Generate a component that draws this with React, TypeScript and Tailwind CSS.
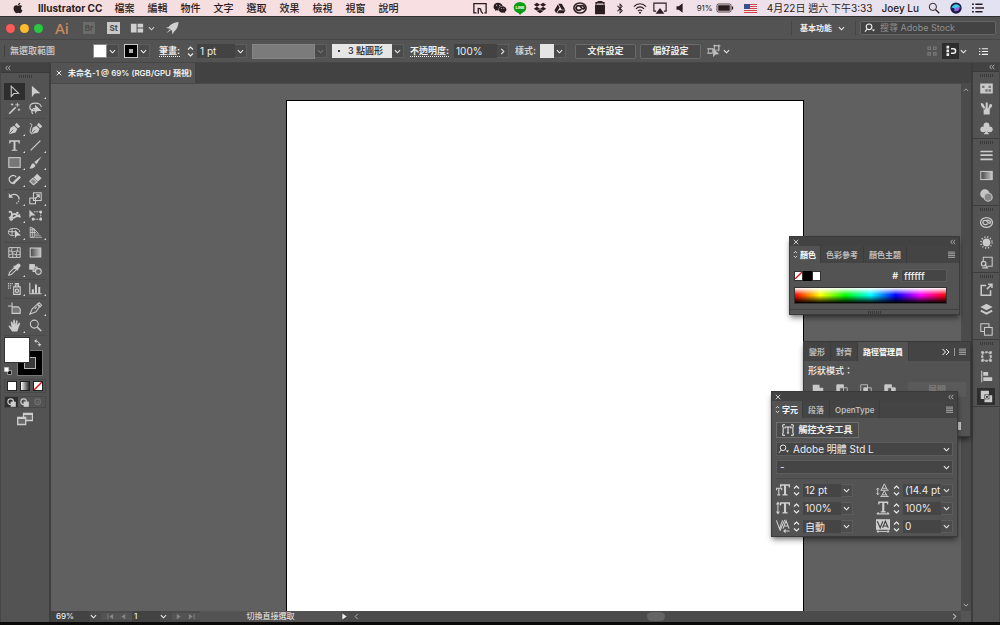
import React from 'react';
import { FaApple, FaDropbox, FaGoogleDrive, FaWeixin, FaBluetoothB } from 'react-icons/fa';

interface IconProps {
  className?: string;
  children: React.ReactNode;
}

const Icon: React.FC<IconProps> = ({ className = 'w-[14px] h-[14px]', children }) => (
  <svg viewBox="0 0 16 16" className={`shrink-0 ${className}`} fill="none" stroke="currentColor" strokeWidth="1.3" aria-hidden="true">
    {children}
  </svg>
);

const solid = { fill: 'currentColor', stroke: 'none' };

const Chevron = ({ className = 'w-[7px] h-[7px]' }: { className?: string }) => (
  <Icon className={className}>
    <path d="M2 5l6 6 6-6" strokeWidth="2.4" />
  </Icon>
);

const ChevronRight = () => (
  <Icon className="w-[7px] h-[7px]">
    <path d="M5 2l6 6-6 6" strokeWidth="2.4" />
  </Icon>
);

const Collapse = () => (
  <Icon className="w-[6px] h-[6px]">
    <path d="M7 2L2 8l5 6M14 2L9 8l5 6" strokeWidth="2" />
  </Icon>
);

const Close = () => (
  <Icon className="w-[6px] h-[6px]">
    <path d="M2 2l12 12M14 2L2 14" strokeWidth="2.6" />
  </Icon>
);

const MenuLines = ({ className = 'w-2 h-2' }: { className?: string }) => (
  <Icon className={className}>
    <path d="M0 2.5h16M0 6.5h16M0 10.5h16M0 14.5h16" strokeWidth="1.8" />
  </Icon>
);

const UpDown = ({ className = 'w-[7px] h-[13px]' }: { className?: string }) => (
  <svg viewBox="0 0 7 13" className={`shrink-0 ${className}`} fill="none" stroke="currentColor" strokeWidth="1.1" aria-hidden="true">
    <path d="M1 4.5L3.5 2 6 4.5M1 8.5L3.5 11 6 8.5" />
  </svg>
);

const Grip = () => (
  <div className="flex gap-px justify-center" aria-hidden="true">
    {[0, 1, 2, 3, 4, 5, 6].map((i) => (
      <span key={i} className="w-px h-[3px] bg-[#3a3a3a]" />
    ))}
  </div>
);

const nib = (
  <>
    <path d="M1 15l2-8 4.500-2.500L11.500 8.500 9.300 13z" {...solid} />
    <path d="M1.500 14.500l5-5" stroke="#535353" strokeWidth="1" />
    <path d="M8.300 3.800L10.500 1l4.500 4.500-2.800 2.200z" {...solid} />
  </>
);

interface Tool {
  label: string;
  more?: boolean;
  active?: boolean;
  art: React.ReactNode;
}

const toolGroups: Tool[][] = [
  [
    { label: '選取工具', active: true, art: <path d="M4 1.5V14l3.300-3.500 5.700-.3z" /> },
    { label: '直接選取工具', more: true, art: <path d="M3.500 1v14L7 10.500l7-.3z" {...solid} /> },
    {
      label: '魔術棒工具',
      art: (
        <>
          <path d="M1.500 14.500l8-8" strokeWidth="2" />
          <path d="M11.500 1v5M9 3.500h5M5 1.500v3M3.500 3h3M13.500 8v3M12 9.500h3" strokeWidth="1.100" />
        </>
      ),
    },
    {
      label: '套索工具',
      art: (
        <>
          <path d="M9 10.500C4 11.500 1 9.500 1 6.500 1 3.500 4 1.500 8 1.500s7 2 7 4.500M5 14.500c-2-1-2-4 0-6s3 1 1 2" strokeWidth="1.500" />
          <path d="M7.500 3.500v11l2.700-3.300 5.300-.2z" {...solid} />
        </>
      ),
    },
  ],
  [
    { label: '鋼筆工具', more: true, art: nib },
    {
      label: '曲線工具',
      art: (
        <>
          <g transform="translate(1.5 0)">{nib}</g>
          <path d="M1 2c4 0 2 3 1 6s-1 6 1.500 6.500" strokeWidth="1.200" />
        </>
      ),
    },
    { label: '文字工具', more: true, art: <path d="M1.500 1.500h13V5.500h-1.300L12.500 3.300H9.200v9.500l2.300.7v1h-7v-1l2.300-.7V3.300H3.500L2.800 5.500H1.500z" {...solid} /> },
    { label: '線段工具', more: true, art: <path d="M2 14L14 2" strokeWidth="1.600" /> },
    { label: '矩形工具', more: true, art: <rect x="1" y="2" width="14" height="12" fill="#777" /> },
    {
      label: '繪圖筆刷工具',
      more: true,
      art: (
        <>
          <path d="M15.500 0.500L6.500 7.500 9 10z" {...solid} />
          <path d="M0.500 15c2-.5 1.500-5.500 5-6l2.300 2.500c0 3-4.300 4.500-7.300 3.500z" {...solid} />
        </>
      ),
    },
    {
      label: 'Shaper 工具',
      more: true,
      art: (
        <>
          <path d="M8.500 12A4.700 4.700 0 1 1 10 5" strokeWidth="1.500" />
          <path d="M6 13l9-8.500" strokeWidth="2.800" />
        </>
      ),
    },
    {
      label: '橡皮擦工具',
      more: true,
      art: (
        <>
          <path d="M5.500 5.500L10 1l5.500 5.500-4.500 4z" {...solid} />
          <path d="M4.500 6.500L1 10l4.500 4.500 4.500-3.500z" fill="#888" />
        </>
      ),
    },
  ],
  [
    {
      label: '旋轉工具',
      more: true,
      art: (
        <>
          <path d="M3 5.500a5.800 5.800 0 1 1 1 7.500" strokeDasharray="15 1.500 1.500 1.500 1.500 9" strokeWidth="1.600" />
          <path d="M1 1.500V7h5.500z" {...solid} />
        </>
      ),
    },
    {
      label: '縮放工具',
      more: true,
      art: (
        <>
          <rect x="5.500" y="1" width="9.500" height="9.500" />
          <rect x="1" y="7.500" width="7" height="7" />
          <path d="M7.500 8.500L12.500 3.500M9 3.500h3.500V7" strokeWidth="1.500" />
        </>
      ),
    },
    {
      label: '寬度工具',
      more: true,
      art: (
        <>
          <path d="M1 4c3-2 4 1 3.500 3.500S6 12 8.500 10s4-2 7 0M1 11c4-1 4-5 7-5s3 4 7 1" strokeWidth="2" />
          <circle cx="4" cy="12.500" r="2" {...solid} />
          <circle cx="11.500" cy="5" r="1.600" {...solid} />
        </>
      ),
    },
    {
      label: '任意變形工具',
      art: (
        <>
          <path d="M0.500 1v10l2.500-3 5-.1z" {...solid} />
          <path d="M6 3.500h8.500v9H5v-2" strokeDasharray="2 1" />
          <path d="M13 2h3v3h-3zM13 11h3v3h-3zM3.500 11h3v3h-3z" {...solid} />
        </>
      ),
    },
    {
      label: '形狀建立程式工具',
      more: true,
      art: (
        <>
          <path d="M8 11.500c-4 1-7.500-.5-7.500-3.800S3 3 6.500 3H9c3 0 5.500 2 5.500 4.500M5 3.500v7.500M1 7h8" strokeWidth="1.200" />
          <path d="M8.500 4.500v10.500l2.500-3 5-.2z" {...solid} />
        </>
      ),
    },
    {
      label: '透視格點工具',
      more: true,
      art: (
        <>
          <path d="M1.500 1.500v12.500h5V3.500zM4 2.500v11.500M1.500 8h7M6 3.500l5.500 5.500M1.500 4.800h6" strokeWidth="1.100" />
          <path d="M7 14h9M7 12h7.500M7 10h5.500" stroke="#999" />
        </>
      ),
    },
  ],
  [
    {
      label: '網格工具',
      art: <path d="M1 2h14v12H1zM1 6c3 0 3 2 6.500 1S12 5 15 8M1 11c3 0 3-2 6.500-1S12 11 15 10M5.500 2c-3 4 2 7 0 12M11 2c3 3-3 7 0 12" strokeWidth="1.200" />,
    },
    { label: '漸層工具', art: <rect x="1.500" y="2.500" width="13" height="11" fill="url(#toolGradient)" /> },
    {
      label: '檢色滴管工具',
      more: true,
      art: (
        <>
          <path d="M1 15l1-3.500 6-6 2.500 2.500-6 6z" strokeWidth="1.300" />
          <path d="M7.500 3.500L9.300 3l2.500-2c2-1 4.500 1 3.400 3.300l-2.200 2.400-.4 1.600-1.200 1.200L6.400 4.600z" {...solid} />
        </>
      ),
    },
    {
      label: '漸變工具',
      art: (
        <>
          <rect x="1" y="2" width="5.500" height="5.500" fill="currentColor" />
          <path d="M5 5h5v5.500H5z" fill="#999" />
          <circle cx="11.500" cy="10.500" r="3.600" fill="#666" />
        </>
      ),
    },
  ],
  [
    {
      label: '符號噴灑器工具',
      more: true,
      art: (
        <>
          <path d="M0 2h6.500M0 4.800h5M0 7.600h4" strokeDasharray="1.300 1" strokeWidth="1.500" />
          <path d="M7 6h8v9.300H7zM9 6V3.500h4V6M8.500 1.800h5" strokeWidth="1.400" />
          <circle cx="11" cy="10.700" r="2" strokeWidth="1.500" />
        </>
      ),
    },
    {
      label: '長條圖工具',
      more: true,
      art: (
        <>
          <path d="M1 1v13.500h14.500" />
          <path d="M3.500 9H6v5.500H3.500zM7.300 3h2.500v11.500H7.300zM11.300 6h2.500v8.500h-2.500z" {...solid} />
        </>
      ),
    },
  ],
  [
    {
      label: '工作區域工具',
      art: (
        <>
          <path d="M0 5h5M5 0.500v5" />
          <path d="M5 6h7.500L15 8.500V14H5z" fill="#777" />
        </>
      ),
    },
    { label: '切片工具', more: true, art: <path d="M1 15l3-6.500L10 3l3 3-4.500 6zM10.500 2.500L12.500 1l3 3L14 5.800zM7 8.500L9.500 6" /> },
    {
      label: '手形工具',
      more: true,
      art: <path d="M5 15.500L1 9.500c-.6-1.200.8-1.800 1.500-1l2 2L3.300 4c0-1.300 1.700-1.400 2-.2L6.400 7l.1-5.300c0-1.400 1.900-1.400 2 0L8.800 7 10 2.400c.3-1.100 2-.9 1.900.3L11.200 7.700l2-2.700c.6-.8 2.100-.2 1.700.8L12.500 12l-1 3.500z" {...solid} />,
    },
    {
      label: '放大鏡工具',
      art: (
        <>
          <circle cx="6.500" cy="6.300" r="4.900" />
          <path d="M10 9.800l5 5" strokeWidth="2" />
        </>
      ),
    },
  ],
];

const dockGroups: Tool[][] = [
  [
    {
      label: '色票',
      art: (
        <>
          <path d="M1 2.500h14v11H1z" fill="currentColor" />
          <path d="M2.500 4.500h3v3h-3zM10.500 4.500h3v3h-3zM6.500 9h3v3h-3zM10.500 9h3v3h-3z" fill="#777" stroke="none" />
        </>
      ),
    },
    { label: '筆刷', art: <path d="M4.500 8h7.500v7.500H4.500zM7 8L4 2 1 1l.5 4 4 4.500zM7 8V0.500h2.500V8zM10 8l2-5.500 3 0.500-.5 3L11.500 9z" {...solid} /> },
    {
      label: '符號',
      art: (
        <g {...solid}>
          <circle cx="8" cy="4.200" r="3.600" />
          <circle cx="4" cy="9" r="3.600" />
          <circle cx="12" cy="9" r="3.600" />
          <path d="M7.300 7h1.400l.8 5.500 2 2.500h-7l2-2.500z" />
        </g>
      ),
    },
  ],
  [
    { label: '筆畫', art: <path d="M0.500 3h15M0.500 7.500h15M0.500 12.800h15" strokeWidth="2" /> },
    { label: '漸層', art: <rect x="1" y="3" width="14" height="10" fill="url(#toolGradient)" /> },
    {
      label: '透明度',
      art: (
        <>
          <circle cx="6" cy="6" r="5" fill="#c4c4c4" />
          <circle cx="10" cy="10" r="5" fill="#888" />
        </>
      ),
    },
  ],
  [
    {
      label: '資料庫',
      art: (
        <>
          <ellipse cx="8" cy="8" rx="7.300" ry="6" strokeWidth="1.500" />
          <path d="M9.500 9.500C8 11.500 3.500 11 3.500 8S7.500 4.500 9 7s4 2.500 4 .5-4-3.500-5.500-1" strokeWidth="1.600" />
        </>
      ),
    },
    {
      label: '外觀',
      art: (
        <>
          <circle cx="8" cy="8" r="4.800" {...solid} />
          <circle cx="8" cy="8" r="6.900" strokeDasharray="1.500 2.110" strokeWidth="1.800" />
        </>
      ),
    },
    {
      label: '繪圖樣式',
      art: (
        <>
          <path d="M4 6V1.500h11v11H9" />
          <circle cx="4.500" cy="9.500" r="2.800" strokeWidth="1.500" />
          <path d="M6 10l3 4.500H3" strokeWidth="1.500" />
        </>
      ),
    },
  ],
  [
    { label: '資產轉存', art: <path d="M7.500 3H1.500v12H13V9M10 1.500h4.700v4.700M14.500 1.500L8.500 7.500" strokeWidth="1.900" /> },
    {
      label: '圖層',
      art: (
        <>
          <path d="M8 1l7.500 4L8 9 0.500 5z" {...solid} />
          <path d="M1 9.300L8 13l7-3.700" strokeWidth="2.400" />
        </>
      ),
    },
    {
      label: '工作區域',
      art: (
        <>
          <path d="M5 10.500H1V1h10v4" />
          <rect x="5.500" y="5.500" width="9.500" height="9.500" />
        </>
      ),
    },
  ],
  [
    {
      label: '變形',
      art: (
        <>
          <rect x="3.500" y="3.500" width="9" height="9" strokeDasharray="2 1" />
          <path d="M1.500 1.500h3v3h-3zM6.500 1.500h3v2h-3zM11.500 1.500h3v3h-3zM1.500 6.500h2v3h-2zM12.500 6.500h2v3h-2zM1.500 11.500h3v3h-3zM6.500 12.500h3v2h-3zM11.500 11.500h3v3h-3z" {...solid} />
        </>
      ),
    },
    { label: '對齊', art: <path d="M1.500 1h1.300v14H1.500zM4 2.500h6V7H4zM4 9h11v4.500H4z" {...solid} /> },
    {
      label: '路徑管理員',
      active: true,
      art: (
        <>
          <path d="M1 1h10v4.500H5.500V11H1z" {...solid} />
          <path d="M15 15H5.500v-3.500h6V6.500H15z" {...solid} />
          <path d="M6.800 6.800h3.400v3.400H6.800z" strokeWidth="1.200" />
        </>
      ),
    },
  ],
];

const menus = ['檔案', '編輯', '物件', '文字', '選取', '效果', '檢視', '視窗', '說明'];

const MenuBar = () => (
  <header className="flex items-center h-4 shrink-0 pl-3 pr-4 text-[10px] text-[#2b1c20] bg-linear-to-r from-[#f3dedf] via-[#f8dfe2] to-[#e2e2f2]">
    <FaApple className="w-3 h-3 mr-[14px]" />
    <span className="font-bold mr-3 whitespace-nowrap">Illustrator CC</span>
    <nav className="flex gap-[13px] whitespace-nowrap">
      {menus.map((m) => (
        <button key={m} className="font-medium">{m}</button>
      ))}
    </nav>
    <div className="flex items-center ml-auto gap-[6px] whitespace-nowrap">
      <Icon>
        <path d="M4 13.500H1V3h14v10.500h-2" strokeWidth="1.500" />
        <path d="M6 14.500V8.500c2 0 3 0 3 2s1 2 2.500 4" strokeWidth="1.500" />
      </Icon>
      <FaWeixin className="w-[14px] h-3" />
      <svg viewBox="0 0 14 13" className="w-[14px] h-[13px]" aria-hidden="true">
        <ellipse cx="7" cy="5.500" rx="6.300" ry="5.500" fill="#0a9c14" />
        <path d="M4 9.500L7 13l3.500-3.500z" fill="#0a9c14" />
        <text x="7" y="7" textAnchor="middle" fontSize="4" fontWeight="700" fill="#fff">LINE</text>
      </svg>
      <FaDropbox className="w-[14px] h-3" />
      <FaGoogleDrive className="w-[14px] h-[11px]" />
      <Icon>
        <ellipse cx="8" cy="8" rx="7" ry="5.800" strokeWidth="1.800" />
        <path d="M9.500 9.500C8 11.500 3.500 11 3.500 8S7.500 4.500 9 7s4 2.500 4 .5-4-3.500-5.500-1" strokeWidth="2" />
      </Icon>
      <Icon>
        <path d="M3 5h10v9.500H3z" fill="currentColor" />
        <path d="M3.500 4V2h9v2M6 2V0.800h4V2" strokeWidth="1.500" />
      </Icon>
      <FaBluetoothB className="w-[14px] h-[11px]" />
      <Icon>
        <path d="M1 6.500c4-4.500 10-4.500 14 0M3.300 9c3-3 6.400-3 9.400 0M5.600 11.500c1.500-1.500 3.300-1.500 4.800 0" strokeWidth="1.300" />
        <circle cx="8" cy="13.500" r="1.200" {...solid} />
      </Icon>
      <Icon>
        <path d="M3.500 11.500H1V2.500h14v9h-2.500" />
        <path d="M8 8l5 6.500H3z" {...solid} />
      </Icon>
      <Icon className="w-[14px] h-[14px] mr-1">
        <path d="M4 6h2.500L11 2.500v11L6.500 10H4z" {...solid} />
      </Icon>
      <div className="flex items-center gap-[3px] mr-1">
        <span className="text-[8px]">91%</span>
        <svg viewBox="0 0 18 10" className="w-[18px] h-[10px]" fill="none" stroke="currentColor" aria-hidden="true">
          <rect x="1" y="1" width="14" height="8" rx="1.500" strokeWidth="0.800" />
          <path d="M2.200 2.200h11.600v5.600H2.200z" {...solid} />
          <path d="M16.500 3.500v3" strokeWidth="1.300" />
        </svg>
      </div>
      <svg viewBox="0 0 13 9" className="w-[13px] h-[9px] mr-1" aria-hidden="true">
        <path fill="#f2e9e9" d="M0 0h13v9H0z" />
        <path stroke="#d0404c" d="M0 .5h13M0 2.500h13M0 4.500h13M0 6.500h13M0 8.500h13" />
        <path fill="#34508f" d="M0 0h6v5H0z" />
      </svg>
      <span className="mr-[3px]">4月22日 週六 下午3:33</span>
      <span className="font-medium mr-[3px]">Joey Lu</span>
      <Icon className="w-3 h-3 mr-1">
        <circle cx="6.500" cy="6.500" r="4.800" />
        <path d="M10 10l5 5" strokeWidth="1.600" />
      </Icon>
      <Icon className="w-3 h-3 mr-1">
        <circle cx="8" cy="8" r="7.500" fill="#1b1d45" stroke="none" />
        <path d="M2 8c2-6 10-7 12 0-3-2-4 2-6 2S5 7 2 8z" fill="#41c8e6" stroke="none" />
        <path d="M5 11c3-5 6-4 8-3-1 4-5 6-8 3z" fill="#a35df0" stroke="none" />
      </Icon>
      <Icon className="w-3 h-3">
        <path d="M4.500 3H14M4.500 8H16M4.500 13H14M0 3h2.500M0 8h2.500M0 13h2.500" strokeWidth="1.700" />
      </Icon>
    </div>
  </header>
);

const AppBar = () => (
  <div className="flex items-center h-6 shrink-0 pl-[6px] pr-1 border-t border-[#2f2f2f] border-b border-b-[#464646]">
    <div className="flex gap-[5px]">
      <button aria-label="關閉" className="w-[9px] h-[9px] rounded-full bg-[#fc5b57]" />
      <button aria-label="最小化" className="w-[9px] h-[9px] rounded-full bg-[#fdbc2e]" />
      <button aria-label="縮放" className="w-[9px] h-[9px] rounded-full bg-[#2ac840]" />
    </div>
    <span className="ml-3 w-7 font-['Noto_Sans'] text-[15px] font-medium text-[#d08a5c]">Ai</span>
    <button className="w-3 h-3 bg-[#6b6b6b] text-[8px] leading-3 font-semibold text-[#484848]">Br</button>
    <button className="ml-3 w-[13px] h-3 bg-[#c9c9c9] text-[8px] leading-3 font-bold text-[#4c4c4c]">St</button>
    <button aria-label="排列文件" className="flex items-center gap-1 ml-[10px] text-[#d0d0d0]">
      <Icon>
        <path d="M1 3h6.500v10H1zM8.700 3H15v4.500H8.700zM8.700 8.700H15V13H8.700z" {...solid} />
      </Icon>
      <Chevron />
    </button>
    <button aria-label="GPU 效能" className="ml-[10px] text-[#d0d0d0]">
      <Icon>
        <path d="M15.500 1C9 2 6 4 4.500 6.500L1 8l4 .5L8 11l.5 4.500L10.500 12C13.500 9.500 15 6 15.500 1zM1.500 14l4-4.500 1 1z" {...solid} />
      </Icon>
    </button>
    <button className="flex items-center gap-[6px] ml-auto h-[14px] pl-2 pr-[10px] border-x border-[#464646] text-[8px] font-bold">
      基本功能
      <Chevron />
    </button>
    <label className="flex items-center ml-1 pl-[3px] w-[136px] h-[14px] rounded-xs border border-[#646464] bg-[#434343]">
      <Icon className="w-3 h-[10px]">
        <circle cx="6.500" cy="6" r="4.500" strokeWidth="1.800" />
        <path d="M3.500 9.500L0 14" strokeWidth="1.800" />
        <path d="M11 10.500h5L13.500 13.500z" {...solid} />
      </Icon>
      <input aria-label="搜尋" placeholder="搜尋 Adobe Stock" className="ml-1 w-full min-w-0 text-[9px] outline-none placeholder:text-[#909090]" />
    </label>
  </div>
);

const dropButton = 'flex items-center justify-center w-3 h-[14px] border-y border-r border-[#5e5e5e] bg-[#4a4a4a]';

const ControlBar = () => (
  <div className="flex items-center h-[23px] shrink-0 pl-1 pr-3 border-b border-[#464646] whitespace-nowrap">
    <span className="w-px h-3 bg-[#404040] mr-[5px]" />
    <span className="w-[83px] font-medium text-[#d0d0d0]">無選取範圍</span>
    <button aria-label="填色" className="w-[14px] h-[14px] bg-white border border-[#8a8a8a]" />
    <button aria-label="填色選項" className={dropButton}><Chevron /></button>
    <button aria-label="筆畫顏色" className="flex items-center justify-center ml-[5px] w-[14px] h-[14px] bg-black border border-[#c8c8c8]">
      <span className="w-1 h-1 bg-[#b0b0b0]" />
    </button>
    <button aria-label="筆畫顏色選項" className={dropButton}><Chevron /></button>
    <label htmlFor="stroke-width" className="ml-[9px] w-7 font-bold underline decoration-dotted underline-offset-2">筆畫:</label>
    <UpDown />
    <input id="stroke-width" defaultValue="1 pt" className="ml-[3px] w-[38px] h-[14px] pl-[3px] bg-[#434343] outline-none text-[10px]" />
    <button aria-label="筆畫寬度選項" className={dropButton}><Chevron /></button>
    <span className="ml-[5px] w-[63px] h-[15px] bg-[#7b7b7b] border border-[#858585]" />
    <button aria-label="變數寬度描述檔" className={`${dropButton} text-[#777]`}><Chevron /></button>
    <button className="flex items-center ml-[5px] w-[60px] h-[14px] pl-[6px] gap-2 bg-[#e6e6e6] text-[#222] font-medium">
      <span className="w-[2px] h-[2px] rounded-full bg-black" />3 點圓形
    </button>
    <button aria-label="筆刷定義" className={dropButton}><Chevron /></button>
    <label htmlFor="opacity" className="ml-[6px] w-11 font-bold underline decoration-dotted underline-offset-2">不透明度:</label>
    <input id="opacity" defaultValue="100%" className="w-[43px] h-[14px] pl-[2px] bg-[#434343] outline-none text-[10px]" />
    <button aria-label="不透明度選項" className={dropButton}><ChevronRight /></button>
    <span className="ml-[6px] w-[25px] font-bold text-[#d0d0d0]">樣式:</span>
    <button aria-label="繪圖樣式" className="w-[14px] h-[14px] bg-[#e4e4e4]" />
    <button aria-label="繪圖樣式選項" className={dropButton}><Chevron /></button>
    <button className="ml-[9px] w-[61px] h-[15px] rounded-xs border border-[#6a6a6a] bg-[#4a4a4a] font-bold">文件設定</button>
    <button className="ml-1 w-[61px] h-[15px] rounded-xs border border-[#6a6a6a] bg-[#4a4a4a] font-bold">偏好設定</button>
    <button aria-label="選取類似物件" className="flex items-center gap-[2px] ml-[6px]">
      <Icon className="w-[14px] h-[14px] text-[#bdbdbd]">
        <path d="M1.500 5.500h5v5h-5zM8.500 2h5v5h-5zM0 5.500h8M0 10.500h6M7 2h8.500M13.500 0.500v8M8.500 0.500V4" strokeWidth="1" />
        <path d="M7 5v10l2.700-3 4.300-.2z" {...solid} />
      </Icon>
      <Chevron />
    </button>
    <div className="flex items-center ml-auto">
      <Icon className="w-[10px] h-[10px] text-[#777]">
        <path d="M1.500 1.500h4v4h-4zM10.500 1.500h4v4h-4zM1.500 10.500h4v4h-4zM10.500 10.500h4v4h-4z" strokeWidth="1.800" />
      </Icon>
      <button aria-label="對齊像素格點" className="flex items-center justify-center ml-[5px] mr-px w-[17px] h-4 bg-[#2d2d2d]">
        <Icon className="w-3 h-3">
          <path d="M2 1h3.500v3.500H2zM2 6h3.500v3.500H2zM2 11h3.500v3.500H2z" {...solid} />
          <path d="M8 5h3.500c3.500 0 3.500 6 0 6H8" strokeWidth="2" />
        </Icon>
      </button>
      <Chevron />
      <Icon className="w-[9px] h-[9px] ml-3">
        <path d="M5 3h11M5 8h11M5 13h11M0 3h2.500M0 8h2.500M0 13h2.500" strokeWidth="2" />
      </Icon>
    </div>
  </div>
);

const Toolbox = () => (
  <aside className="flex flex-col w-[51px] shrink-0 border-l border-[#464646] border-r-2 border-r-[#3e3e3e] text-[#cdcdcd]">
    <div className="flex items-center h-[10px] px-1 bg-[#424242] border-b border-[#3a3a3a]"><Collapse /></div>
    <div className="h-[10px] pt-[2px]"><Grip /></div>
    {toolGroups.map((group, i) => (
      <div key={i} className={`grid grid-cols-2 mx-[3px] pb-px border-b border-[#4a4a4a] ${i % 2 === 0 ? 'mb-px' : ''}`}>
        {group.map((t) => (
          <button
            key={t.label}
            aria-label={t.label}
            className={`relative flex items-center justify-center h-[17px] ${t.active ? 'bg-[#2e2e2e]' : ''}`}
          >
            <Icon className="w-[13px] h-[13px]">{t.art}</Icon>
            {t.more && (
              <svg viewBox="0 0 2 2" className="absolute right-0 bottom-px w-[2px] h-[2px]">
                <path d="M2 0v2H0z" fill="#ddd" />
              </svg>
            )}
          </button>
        ))}
      </div>
    ))}
    <div className="relative h-[41px] mx-[3px] mt-px">
      <span className="absolute left-[14px] top-[14px] w-6 h-6 bg-black outline outline-[#777]">
        <span className="block w-3 h-3 m-[6px] border border-[#b5b5b5] bg-[#3a3a3a]" />
      </span>
      <button aria-label="填色" className="absolute left-0 top-0 w-[26px] h-[26px] bg-white border border-[#333]" />
      <Icon className="absolute right-1 top-[2px] w-2 h-2">
        <path d="M3 4c5 0 8 3 8 8" strokeWidth="2" />
        <path d="M5 0v8L0 4zM7 10h8l-4 5z" {...solid} />
      </Icon>
      <Icon className="absolute left-0 bottom-[3px] w-2 h-2">
        <path d="M7 7h8v8H7z" fill="#111" />
        <path d="M1 1h8v8H1z" fill="#fff" />
      </Icon>
    </div>
    <div className="grid grid-cols-3 h-[14px] mx-[3px] mt-px border border-[#484848] place-items-center">
      <button aria-label="顏色" className="w-[10px] h-[10px] bg-white border border-[#222]" />
      <button aria-label="漸層" className="w-[10px] h-[10px] bg-linear-to-r from-white to-[#333] border border-[#222]" />
      <button aria-label="無" className="w-[10px] h-[10px] bg-white border border-[#222]">
        <svg viewBox="0 0 8 8"><path d="M0 8L8 0" stroke="#e8141c" strokeWidth="1.500" /></svg>
      </button>
    </div>
    <div className="grid grid-cols-3 h-3 mx-[3px] mt-[3px] border border-[#484848]">
      {['一般繪製', '繪製下層', '繪製內側'].map((mode, i) => (
        <button key={mode} aria-label={mode} className={`flex items-center justify-center ${i === 0 ? 'bg-[#2e2e2e]' : ''} ${i === 2 ? 'text-[#707070]' : ''}`}>
          <Icon className="w-[9px] h-[9px]">
            <circle cx="6.500" cy="6.500" r="5" strokeWidth="2" />
            {i < 2 ? <path d="M7 7h8v8H7z" fill="currentColor" /> : <circle cx="7" cy="7" r="1.500" />}
          </Icon>
        </button>
      ))}
    </div>
    <button aria-label="變更螢幕模式" className="self-center mt-[3px]">
      <Icon className="w-4 h-4">
        <path d="M6.500 2.500h9v7h-9z" fill="#6a6a6a" />
        <path d="M.7 6.500h8v7h-8z" fill="#6a6a6a" />
        <path d="M6.500 3h9M.7 7h8" strokeWidth="2" />
      </Icon>
    </button>
  </aside>
);

const Dock = () => (
  <aside className="flex flex-col w-[29px] shrink-0 border-l-2 border-[#3c3c3c] border-r border-r-[#464646] text-[#cacaca]">
    <div className="flex items-center justify-end h-[9px] px-1 bg-[#424242] border-b border-[#3a3a3a]"><Collapse /></div>
    {dockGroups.map((group, i) => (
      <div key={i} className="border-b border-[#3e3e3e] pt-[2px]">
        <div className="h-1"><Grip /></div>
        {group.map((t) => (
          <button key={t.label} aria-label={t.label} className="flex items-center justify-center w-full h-5">
            <span className={`flex items-center justify-center w-[18px] h-[17px] ${t.active ? 'bg-[#2e2e2e]' : ''}`}>
              <Icon className="w-[13px] h-[13px]">{t.art}</Icon>
            </span>
          </button>
        ))}
      </div>
    ))}
  </aside>
);

const panel = 'absolute bg-[#535353] border border-[#3a3a3a] shadow-md shadow-black/40 whitespace-nowrap';

const PanelHeader = () => (
  <div className="flex items-center justify-between h-[9px] px-[3px] bg-[#424242] text-[#cfcfcf]">
    <button aria-label="關閉面板" className="flex"><Close /></button>
    <button aria-label="收合面板" className="flex"><Collapse /></button>
  </div>
);

interface TabsProps {
  tabs: string[];
  active: number;
  docked?: boolean;
}

const PanelTabs: React.FC<TabsProps> = ({ tabs, active, docked }) => (
  <div className={`flex bg-[#444444] text-[8px] font-semibold text-[#bdbdbd] ${docked ? 'h-[19px]' : 'h-[17px]'}`}>
    {tabs.map((tab, i) => (
      <button
        key={tab}
        className={`flex items-center border-r border-[#3c3c3c] ${docked ? 'px-[5px]' : i === 0 ? 'pl-[3px] pr-1 gap-[2px]' : 'px-[5px]'} ${i === active ? 'bg-[#535353] text-white font-bold' : ''}`}
      >
        {!docked && i === 0 && <UpDown className="w-[5px] h-[9px]" />}
        {tab}
      </button>
    ))}
    <div className="flex items-center gap-1 ml-auto mr-1">
      {docked && (
        <>
          <Icon className="w-2 h-2 text-white"><path d="M1 2l6 6-6 6M8 2l6 6-6 6" strokeWidth="2" /></Icon>
          <span className="w-px h-2 bg-[#999]" />
        </>
      )}
      <MenuLines className="w-[7px] h-[7px]" />
    </div>
  </div>
);

const ColorPanel = () => (
  <section className={`${panel} right-10 top-[173px] w-[171px]`}>
    <PanelHeader />
    <PanelTabs tabs={['顏色', '色彩參考', '顏色主題']} active={0} />
    <div className="px-1 pt-[7px]">
      <div className="flex items-center h-[11px]">
        <button aria-label="無" className="w-[9px] h-[10px] bg-white border border-[#333]">
          <svg viewBox="0 0 8 8"><path d="M0 8L8 0" stroke="#e8141c" strokeWidth="1.500" /></svg>
        </button>
        <button aria-label="黑色" className="w-[9px] h-[10px] bg-black" />
        <button aria-label="白色" className="w-[9px] h-[10px] bg-white border border-[#333]" />
        <label htmlFor="hex" className="ml-auto mr-[3px] font-bold">#</label>
        <input id="hex" defaultValue="ffffff" className="mr-2 w-[46px] h-[13px] pl-[2px] border border-[#5c5c5c] bg-[#454545] text-[10px] font-medium outline-none" />
      </div>
      <div className="mt-[6px] mr-2 h-[17px] border border-[#333] bg-[linear-gradient(to_bottom,white_0%,transparent_45%,transparent_50%,black_100%),linear-gradient(to_right,red,yellow,lime,cyan,blue,magenta,red)]" />
    </div>
    <div className="mt-[5px] h-[5px] pt-px border-t border-[#404040]"><Grip /></div>
  </section>
);

const shapeModes = [
  { label: '聯集', d: 'M1 1h9v4h5v10H5v-5H1z' },
  { label: '減去上層', d: 'M1 1h9v4H5v5H1z' },
  { label: '交集', d: 'M5 5h5v5H5z' },
  { label: '差集', d: 'M1 1h9v4H5v5H1zM10 10V5h5v10H5v-5z' },
];

const PathfinderPanel = () => (
  <section className={`${panel} right-[29px] top-[278px] w-[168px] h-[96px]`}>
    <PanelTabs tabs={['變形', '對齊', '路徑管理員']} active={2} docked />
    <div className="px-1 pt-1">
      <p className="h-3 leading-3 font-medium">形狀模式：</p>
      <div className="flex items-center gap-3 mt-[5px] pl-1">
        {shapeModes.map((mode, i) => (
          <button key={mode.label} aria-label={mode.label} className="text-[#c8c8c8]">
            <Icon className="w-3 h-3">
              {i > 0 && <path d="M1 1h9v9H1zM5 5h10v10H5z" strokeWidth="1.100" />}
              <path d={mode.d} {...solid} />
            </Icon>
          </button>
        ))}
        <button className="ml-auto w-[63px] h-[15px] bg-[#5a5a5a] text-[#7a7a7a] font-bold">展開</button>
      </div>
    </div>
    <span className="absolute right-[9px] bottom-[6px] w-1 h-2 bg-[#c4c4c4]" />
  </section>
);

interface MetricProps {
  id: string;
  label: string;
  value: string;
  art: React.ReactNode;
}

const Metric: React.FC<MetricProps> = ({ id, label, value, art }) => (
  <div className="flex items-center h-[18px]">
    <label htmlFor={id} aria-label={label} className="mr-[3px] text-[#cfcfcf]"><Icon>{art}</Icon></label>
    <UpDown />
    <input id={id} defaultValue={value} className="ml-[3px] w-[38px] h-[13px] pl-[2px] bg-[#454545] outline-none text-[10px]" />
    <button aria-label={`${label}選項`} className="flex items-center justify-center w-3 h-[13px] bg-[#4c4c4c] border-y border-r border-[#5c5c5c]"><Chevron /></button>
  </div>
);

const bigT = 'M4.500 1.500h11.500V5h-1.200L14.200 3.200h-2.700v9.300l1.800.5v1.200H7.300V13l1.800-.5V3.200H6.300L5.700 5H4.500z';

const metrics: MetricProps[] = [
  {
    id: 'size', label: '字體大小', value: '12 pt',
    art: <><path d={bigT} {...solid} /><path d="M0 6h6.500v2.200M.6 6v2.200M3.200 6v8M1.500 13.500h3.400" strokeWidth="1.300" /></>,
  },
  {
    id: 'leading', label: '行距', value: '(14.4 pt)',
    art: <><path d="M6 8l3.500-7L13 8M7.200 6h4.600M6 15.500L9.500 9l3.500 6.500M7.200 13.500h4.600M5 8.300h9.500M5 15.500h9.500M2 6v7M.5 7.500L2 5.800l1.500 1.700M.5 11.800L2 13.500l1.500-1.700" strokeWidth="1.100" /></>,
  },
  {
    id: 'vscale', label: '垂直縮放', value: '100%',
    art: <><path d={bigT} {...solid} /><path d="M2.200 2v12M.5 4l1.700-2.300L4 4M.5 12l1.700 2.300L4 12" strokeWidth="1.200" /></>,
  },
  {
    id: 'hscale', label: '水平縮放', value: '100%',
    art: <><path d={bigT} {...solid} transform="translate(-2 -1)" /><path d="M1 14.700h14M3 13l-2 1.700M13 13l2 1.700" strokeWidth="1.300" /></>,
  },
  {
    id: 'kerning', label: '字距微調', value: '自動',
    art: <path d="M.5 1.500L4 11l3.500-9.500M10 1L4.500 13.500M8 11l3.500-9L15 11M9.500 8h4.500M9 13.800h6.500M11 12L9 13.800l2 1.800" strokeWidth="1.200" />,
  },
  {
    id: 'tracking', label: '字元間距', value: '0',
    art: (
      <>
        <path d="M.5 1h15v10.500H.5z" fill="currentColor" />
        <path d="M1.500 2.500L4.800 10l3-7.500M7.500 10l3.200-7.500L14 10M9 8h4" stroke="#444" />
        <path d="M1 14.200h14M3 12.600l-2 1.600 2 1.600M13 12.600l2 1.600-2 1.600" strokeWidth="1.100" />
      </>
    ),
  },
];

const CharacterPanel = () => (
  <section className={`${panel} right-[42px] top-[328px] w-[187px] pb-px`}>
    <PanelHeader />
    <PanelTabs tabs={['字元', '段落', 'OpenType']} active={0} />
    <div className="px-1 pt-1">
      <button className="flex items-center justify-center gap-1 w-[83px] h-4 border border-[#6e6e6e] bg-[#4b4b4b] font-bold">
        <Icon className="w-3 h-3">
          <path d="M4 4h8v2M4 4v2M8 4v8M6.500 12h3M1 1h3M1 1v3M15 1v3M12 1h3M1 12v3h3M15 12v3h-3M1.500 4v8M14.500 4v8" strokeWidth="1.400" />
        </Icon>
        觸控文字工具
      </button>
      <label className="relative flex items-center mt-1 h-[14px] border border-[#5c5c5c] bg-[#454545]">
        <Icon className="w-3 h-[10px] ml-px">
          <circle cx="6.500" cy="6" r="4.500" strokeWidth="1.500" />
          <path d="M3.500 9.500L0 14" strokeWidth="1.500" />
          <path d="M11 10.500h5L13.500 13.500z" {...solid} />
        </Icon>
        <select aria-label="字體" className="flex-1 pl-[3px] appearance-none outline-none text-[10px]">
          <option>Adobe 明體 Std L</option>
        </select>
        <span className="absolute right-[2px]"><Chevron /></span>
      </label>
      <label className="relative flex items-center mt-1 h-[14px] border border-[#5c5c5c] bg-[#454545]">
        <select aria-label="字體樣式" className="flex-1 pl-[3px] appearance-none outline-none text-[10px]">
          <option>-</option>
        </select>
        <span className="absolute right-[2px]"><Chevron /></span>
      </label>
      <div className="grid grid-cols-[1fr_auto] mt-1 pt-[2px] border-t border-[#484848]">
        {metrics.map((m) => (
          <Metric key={m.id} {...m} />
        ))}
      </div>
    </div>
  </section>
);

const StatusBar = () => (
  <footer className="flex items-center h-[11px] shrink-0 bg-[#4b4b4b] text-[8px] leading-[11px] whitespace-nowrap">
    <input aria-label="縮放比例" defaultValue="69%" className="w-[39px] h-[11px] pl-[5px] font-medium bg-[#434343] outline-none" />
    <button aria-label="縮放選項" className="w-[11px]"><Chevron /></button>
    <div className="flex items-center gap-[6px] w-[31px] pl-[6px] bg-[#535353] text-[#858585]">
      <Icon className="w-[7px] h-[7px]"><path d="M2 2v12" strokeWidth="2" /><path d="M14 2v12L5 8z" {...solid} /></Icon>
      <Icon className="w-[7px] h-[7px]"><path d="M12 2v12L3 8z" {...solid} /></Icon>
    </div>
    <input aria-label="工作區域" defaultValue="1" className="w-[28px] h-[11px] pl-[2px] font-medium bg-[#434343] outline-none" />
    <button aria-label="工作區域選項" className="w-3"><Chevron /></button>
    <div className="flex items-center gap-[6px] w-7 pl-[3px] bg-[#535353] text-[#858585]">
      <Icon className="w-[7px] h-[7px]"><path d="M4 2v12l9-6z" {...solid} /></Icon>
      <Icon className="w-[7px] h-[7px]"><path d="M14 2v12" strokeWidth="2" /><path d="M2 2v12l9-6z" {...solid} /></Icon>
    </div>
    <span className="flex-none w-[141px] text-center bg-[#535353]">切換直接選取</span>
    <Icon className="w-[7px] h-[7px]"><path d="M3 1v14l10-7z" {...solid} /></Icon>
    <div className="flex flex-1 items-center justify-between pl-[5px] pr-[3px] text-[#bbb]">
      <Icon className="w-[7px] h-[7px]"><path d="M11 2L5 8l6 6" strokeWidth="2" /></Icon>
      <span className="w-[18px] h-[9px] rounded-full bg-[#656565]" />
      <ChevronRight />
    </div>
    <span className="w-[10px] h-full bg-[#555]" />
  </footer>
);

const App: React.FC = () => (
  <div className="flex flex-col h-screen overflow-hidden bg-[#535353] text-[#eeeeee] text-[9px] leading-3 font-['Inter','Noto_Sans_CJK_TC',sans-serif]">
    <svg className="absolute w-0 h-0" aria-hidden="true">
      <defs>
        <linearGradient id="toolGradient">
          <stop offset="0" stopColor="#444" />
          <stop offset="1" stopColor="#c8c8c8" />
        </linearGradient>
      </defs>
    </svg>
    <MenuBar />
    <AppBar />
    <ControlBar />
    <div className="relative flex flex-1 min-h-0">
      <Toolbox />
      <main className="flex flex-col flex-1 min-w-0">
        <div className="flex h-[21px] shrink-0 bg-[#424242] border-b border-[#4a4a4a]">
          <div className="flex items-center gap-[6px] px-[5px] w-36 bg-[#535353] text-[8px] font-semibold whitespace-nowrap">
            <button aria-label="關閉文件"><Close /></button>
            <span>未命名-1 @ 69% (RGB/GPU 預視)</span>
          </div>
        </div>
        <div className="flex flex-1 min-h-0">
          <div className="relative flex-1 overflow-hidden bg-[#606060]">
            <div className="absolute left-[235px] top-4 bottom-0 w-[518px] bg-white border border-b-0 border-black" />
          </div>
          <div className="flex flex-col items-center justify-between w-[10px] py-[3px] bg-[#4b4b4b] text-[#bbb]">
            <Icon className="w-[6px] h-[6px]"><path d="M2 11l6-6 6 6" strokeWidth="2" /></Icon>
            <Chevron className="w-[6px] h-[6px]" />
          </div>
        </div>
        <StatusBar />
      </main>
      <Dock />
      <PathfinderPanel />
      <ColorPanel />
      <CharacterPanel />
    </div>
    <div className="h-[3px] shrink-0 bg-[#0d0a0a]" />
  </div>
);

export default App;
